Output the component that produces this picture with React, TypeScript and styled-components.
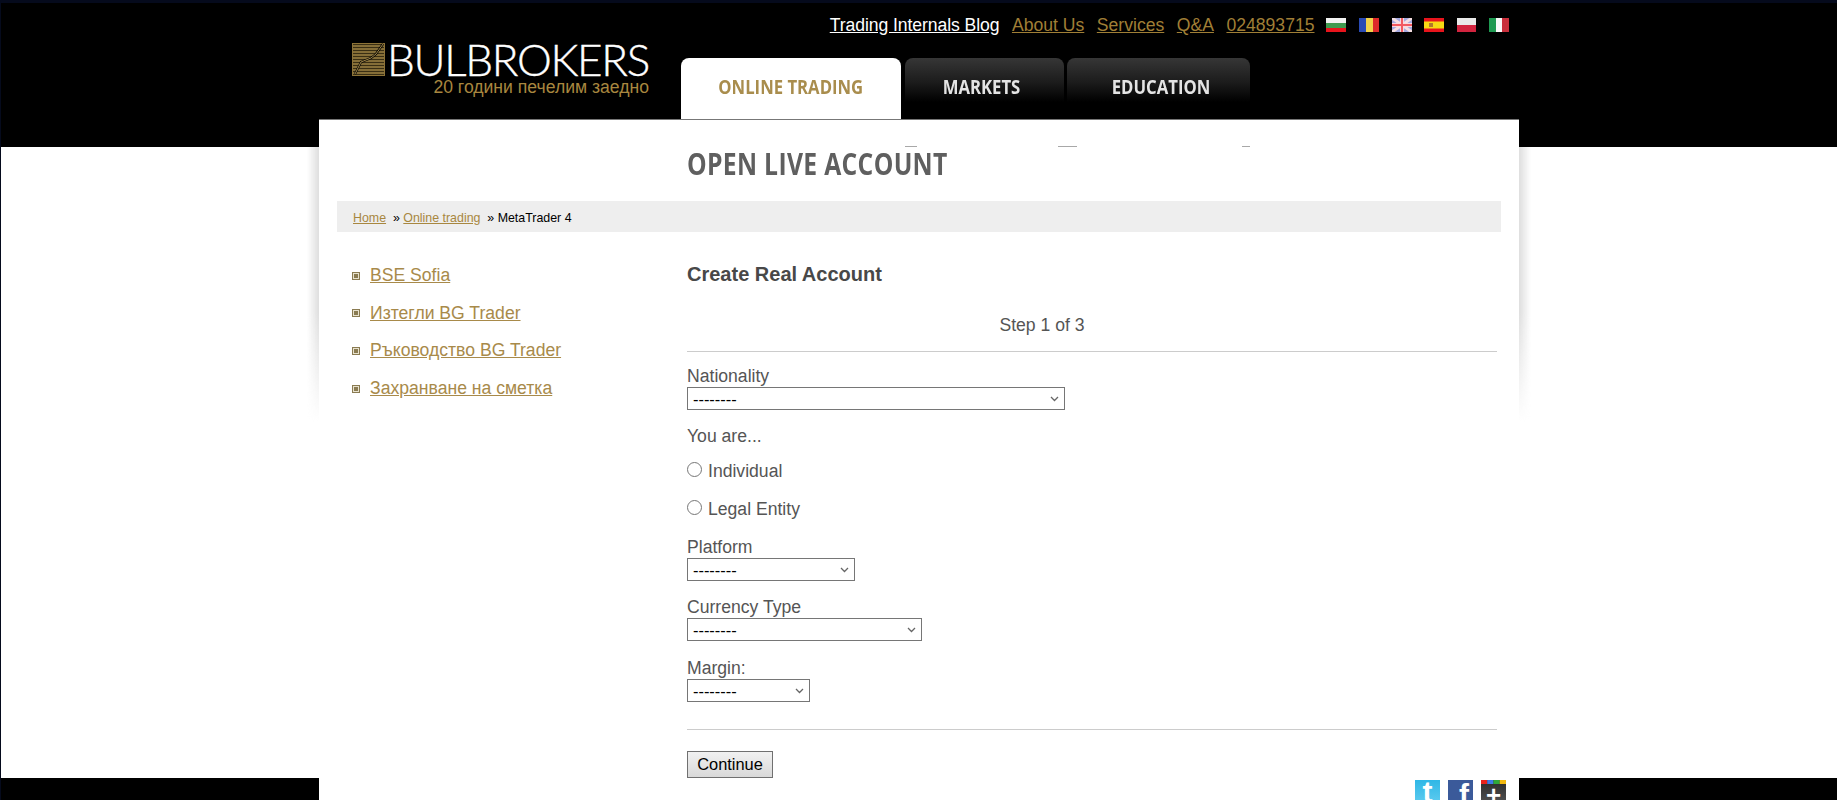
import React from "react";
import styled, { createGlobalStyle } from "styled-components";

const Global = createGlobalStyle`
  html, body { margin: 0; padding: 0; height: 800px; overflow: hidden; background: #fff; }
  body { font-family: "Liberation Sans", Arial, sans-serif; }
`;

const GOLD = "#a8873f";
const CONDENSED = `"Open Sans", "Liberation Sans", sans-serif`;
const CHEVRON = `url("data:image/svg+xml,%3Csvg xmlns='http://www.w3.org/2000/svg' width='9' height='6' viewBox='0 0 9 6'%3E%3Cpath d='M1 1l3.5 3.5L8 1' fill='none' stroke='%23666' stroke-width='1.3'/%3E%3C/svg%3E")`;

const Page = styled.div`
  position: relative;
  z-index: 0;
  height: 800px;
  padding-left: 1px;
  overflow: hidden;
  background: linear-gradient(to bottom, #000 147px, #fff 147px, #fff 778px, #000 778px);
  box-shadow: inset 1px 3px 0 #050a1c;
`;

const Header = styled.header`
  width: 1200px;
  height: 119px;
  margin: 0 auto;
  display: flex;
`;

const Brand = styled.div`
  width: 362px;
  box-sizing: border-box;
  padding: 41px 32px 0 33px;
  flex: none;
`;

const LogoRow = styled.div`
  display: flex;
  align-items: center;
  height: 36px;
  gap: 2px;
`;

const Wordmark = styled.span`
  font-family: "Lato", "Liberation Sans", sans-serif;
  font-weight: 300;
  font-size: 44px;
  line-height: 36px;
  color: #fff;
  letter-spacing: -1.3px;
  -webkit-text-stroke: 0.4px #fff;
  white-space: nowrap;
`;

const Tagline = styled.div`
  text-align: right;
  color: ${GOLD};
  font-size: 17.6px;
  line-height: 20px;
  white-space: nowrap;
`;

const HeaderRight = styled.div`
  flex: 1;
  display: flex;
  flex-direction: column;
`;

const TopBar = styled.div`
  height: 59px;
  box-sizing: border-box;
  padding: 15px 10px 0 0;
  display: flex;
  justify-content: flex-end;
  align-items: flex-start;
`;

const TopLink = styled.a<{ $light?: boolean; $last?: boolean }>`
  color: ${(p) => (p.$light ? "#fff" : "#a07f36")};
  text-decoration: underline;
  font-size: 17.6px;
  line-height: 20px;
  letter-spacing: ${(p) => (p.$light ? "-0.08px" : "0")};
  margin-right: ${(p) => (p.$last ? 11.5 : 12.5)}px;
  white-space: nowrap;
`;

const Flags = styled.div`
  display: flex;
  gap: 12.8px;
  padding-top: 3px;
`;

const Tabs = styled.nav`
  display: flex;
  gap: 3px;
  height: 61px;
  position: relative;
  z-index: 2;
`;

const Tab = styled.a<{ $active?: boolean; $w: number; $nudge?: number }>`
  width: ${(p) => p.$w}px;
  height: ${(p) => (p.$active ? 61 : 60)}px;
  box-sizing: border-box;
  padding: 18px ${(p) => (p.$nudge && p.$nudge < 0 ? -p.$nudge : 0)}px 0 ${(p) => (p.$nudge && p.$nudge > 0 ? p.$nudge : 0)}px;
  border-radius: 8px 8px 0 0;
  text-align: center;
  font-family: ${CONDENSED};
  font-weight: 700;
  font-size: 20px;
  line-height: 22px;
  color: ${(p) => (p.$active ? "#a98d4d" : "#e4e4e4")};
  background: ${(p) => (p.$active ? "#fff" : "linear-gradient(to bottom, #363636 0, #1c1c1c 24px, #000 44px)")};
  margin-right: ${(p) => (p.$active ? 1 : 0)}px;
  white-space: nowrap;
`;

const TabLabel = styled.span`
  display: inline-block;
  transform: scaleX(0.835);
`;

const Sheet = styled.div`
  position: relative;
  width: 1200px;
  height: 681px;
  margin: 0 auto;
  background: #fff;
  border-top: 1px solid #777;
  box-sizing: border-box;

  &::before {
    content: "";
    position: absolute;
    top: 27px;
    left: -12px;
    right: -12px;
    height: 275px;
    z-index: -1;
    background: linear-gradient(to right, transparent 0, #dedede 12px, #dedede calc(100% - 12px), transparent 100%);
    -webkit-mask-image: linear-gradient(to bottom, #000 60%, transparent 100%);
    mask-image: linear-gradient(to bottom, #000 60%, transparent 100%);
  }
`;

const Mark = styled.i<{ $x: number; $w: number }>`
  position: absolute;
  top: 26px;
  left: ${(p) => p.$x}px;
  width: ${(p) => p.$w}px;
  height: 1px;
  background: #a8a8a8;
`;

const PageTitle = styled.h1`
  margin: 0;
  padding: 26px 0 0 368px;
  height: 81px;
  box-sizing: border-box;
  font-family: ${CONDENSED};
  font-weight: 700;
  font-size: 31px;
  line-height: 34px;
  color: #5f5f5f;
  letter-spacing: 0.4px;
  white-space: nowrap;
`;

const TitleText = styled.span`
  display: inline-block;
  transform-origin: left center;
  transform: scaleX(0.797);
`;

const Breadcrumb = styled.div`
  height: 31px;
  margin: 0 18px;
  padding: 2px 0 0 16px;
  box-sizing: border-box;
  background: #eee;
  display: flex;
  align-items: center;
  font-size: 12.4px;
  color: #000;
  white-space: pre;
`;

const CrumbLink = styled.a`
  color: ${GOLD};
  text-decoration: underline;
`;

const Body = styled.div`
  display: flex;
  height: 547px;
`;

const Sidebar = styled.ul`
  list-style: none;
  margin: 0;
  padding: 31px 0 0 33px;
  width: 368px;
  box-sizing: border-box;
  flex: none;
`;

const SideItem = styled.li`
  display: flex;
  align-items: center;
  gap: 10px;
  height: 25px;
  margin-bottom: 12.7px;
`;

const Bullet = styled.span`
  width: 8px;
  height: 8px;
  box-sizing: border-box;
  border: 1px solid #8a7b52;
  background: #8a7b52;
  box-shadow: inset 0 0 0 1px #e8e2ce;
  flex: none;
`;

const SideLink = styled.a`
  color: #a88a4a;
  text-decoration: underline;
  font-size: 17.6px;
`;

const Main = styled.main`
  width: 810px;
  color: #555;
  font-size: 17.6px;
`;

const Heading = styled.h2`
  margin: 30px 0 0;
  font-size: 20px;
  line-height: 24px;
  font-weight: 700;
  color: #484848;
`;

const Step = styled.div`
  width: 710px;
  margin-top: 27px;
  text-align: center;
  line-height: 24px;
`;

const Rule = styled.hr<{ $top: number }>`
  margin: ${(p) => p.$top}px 0 0;
  border: 0;
  height: 1px;
  background: #ccc;
`;

const Field = styled.div<{ $top: number }>`
  display: flex;
  flex-direction: column;
  align-items: flex-start;
  margin-top: ${(p) => p.$top}px;
`;

const FieldLabel = styled.label`
  line-height: 22px;
`;

const Select = styled.select<{ $w: number }>`
  appearance: none;
  -webkit-appearance: none;
  width: ${(p) => p.$w}px;
  height: 23px;
  font-family: "Liberation Sans", Arial, sans-serif;
  font-size: 16.4px;
  color: #000;
  background: #fff ${CHEVRON} no-repeat right 5px center;
  border: 1px solid #767676;
  border-radius: 0;
  padding: 0 0 0 5px;
  display: block;
`;

const RadioRow = styled.label<{ $top: number }>`
  display: flex;
  align-items: center;
  gap: 6px;
  height: 24px;
  margin-top: ${(p) => p.$top}px;
`;

const Radio = styled.input`
  width: 15px;
  height: 15px;
  margin: -4px 0 0 0;
  flex: none;
`;

const Plain = styled.div`
  line-height: 20px;
  margin-top: 16px;
`;

const Continue = styled.button`
  display: block;
  margin-top: 21px;
  width: 86px;
  height: 27px;
  padding: 0;
  background: linear-gradient(to bottom, #f1f1f1, #d9d9d9);
  border: 1px solid #707070;
  border-radius: 0;
  font-family: "Liberation Sans", Arial, sans-serif;
  font-size: 16.4px;
  color: #000;
`;

const SocialRow = styled.div`
  display: flex;
  justify-content: flex-end;
  gap: 8px;
  padding: 1px 13px 0 0;
`;

const Social = styled.a<{ $bg: string; $pad: string; $size: number }>`
  position: relative;
  width: 25px;
  height: 25px;
  box-sizing: border-box;
  padding: ${(p) => p.$pad};
  display: flex;
  justify-content: center;
  font-family: "Liberation Sans", sans-serif;
  font-weight: 700;
  color: #fff;
  font-size: ${(p) => p.$size}px;
  line-height: 20px;
  background: ${(p) => p.$bg};
  overflow: hidden;
`;

const GoogleStripe = styled.svg`
  position: absolute;
  top: 0;
  left: 0;
`;

const LogoIcon = () => (
  <svg width="33" height="33" viewBox="0 0 33 33" style={{ flex: "none" }}>
    <rect x="0.5" y="0.5" width="32" height="32" fill="#3a2f14" stroke="#8d7337" />
    {[3, 6, 9, 12, 15, 18, 21, 24, 27, 30].map((y) => (
      <line key={y} x1="1" x2="32" y1={y} y2={y} stroke="#a68a48" strokeWidth="1.4" />
    ))}
    <path d="M3 31 L9 19 L19 15 L24 11 L31 1" fill="none" stroke="#000" strokeWidth="2.2" />
    <path d="M3 31 L9 19 L19 15 L24 11 L31 1" fill="none" stroke="#caa95c" strokeWidth="0.8" />
  </svg>
);

const flagBlur = { filter: "blur(0.5px)" };

const FlagBG = () => (
  <svg width="20" height="14" viewBox="0 0 20 14" style={flagBlur}>
    <rect width="20" height="5" fill="#f2f2f2" />
    <rect y="5" width="20" height="5" fill="#3f9a4f" />
    <rect y="10" width="20" height="4" fill="#e8141c" />
  </svg>
);
const FlagRO = () => (
  <svg width="20" height="14" viewBox="0 0 20 14" style={flagBlur}>
    <rect width="7" height="14" fill="#2a4bb5" />
    <rect x="7" width="7" height="14" fill="#f3d34a" />
    <rect x="14" width="6" height="14" fill="#dc2a2a" />
  </svg>
);
const FlagUK = () => (
  <svg width="20" height="14" viewBox="0 0 20 14" style={flagBlur}>
    <rect width="20" height="14" fill="#a4a9e0" />
    <path d="M0 0 L20 14 M20 0 L0 14" stroke="#f5dfe2" strokeWidth="3" />
    <path d="M10 0 V14 M0 7 H20" stroke="#f8d8dc" strokeWidth="4" />
    <path d="M10 0 V14 M0 7 H20" stroke="#f25a60" strokeWidth="2" />
  </svg>
);
const FlagES = () => (
  <svg width="20" height="14" viewBox="0 0 20 14" style={flagBlur}>
    <rect width="20" height="14" fill="#e8141c" />
    <rect y="3.5" width="20" height="7" fill="#f7d914" />
    <rect x="5" y="5" width="4" height="4" fill="#b0792c" />
  </svg>
);
const FlagPL = () => (
  <svg width="19" height="14" viewBox="0 0 19 14" style={flagBlur}>
    <rect width="19" height="7" fill="#e9e9e9" />
    <rect y="7" width="19" height="7" fill="#d2243f" />
  </svg>
);
const FlagIT = () => (
  <svg width="20" height="14" viewBox="0 0 20 14" style={flagBlur}>
    <rect width="7" height="14" fill="#1f9a52" />
    <rect x="7" width="6" height="14" fill="#fafafa" />
    <rect x="13" width="7" height="14" fill="#c9303c" />
  </svg>
);

const sideLinks = ["BSE Sofia", "Изтегли BG Trader", "Ръководство BG Trader", "Захранване на сметка"];

export default function App() {
  return (
    <Page>
      <Global />
      <Header>
        <Brand>
          <LogoRow>
            <LogoIcon />
            <Wordmark>BULBROKERS</Wordmark>
          </LogoRow>
          <Tagline>20 години печелим заедно</Tagline>
        </Brand>
        <HeaderRight>
          <TopBar>
            <TopLink $light>Trading Internals Blog</TopLink>
            <TopLink>About Us</TopLink>
            <TopLink>Services</TopLink>
            <TopLink>Q&amp;A</TopLink>
            <TopLink $last>024893715</TopLink>
            <Flags>
              <FlagBG />
              <FlagRO />
              <FlagUK />
              <FlagES />
              <FlagPL />
              <FlagIT />
            </Flags>
          </TopBar>
          <Tabs>
            <Tab $active $w={220}><TabLabel>ONLINE TRADING</TabLabel></Tab>
            <Tab $w={159} $nudge={-6}><TabLabel>MARKETS</TabLabel></Tab>
            <Tab $w={183} $nudge={5}><TabLabel>EDUCATION</TabLabel></Tab>
          </Tabs>
        </HeaderRight>
      </Header>
      <Sheet>
        <Mark $x={586} $w={12} />
        <Mark $x={739} $w={19} />
        <Mark $x={923} $w={8} />
        <PageTitle><TitleText>OPEN LIVE ACCOUNT</TitleText></PageTitle>
        <Breadcrumb>
          <CrumbLink>Home</CrumbLink>
          {"  » "}
          <CrumbLink>Online trading</CrumbLink>
          {"  » MetaTrader 4"}
        </Breadcrumb>
        <Body>
          <Sidebar>
            {sideLinks.map((t) => (
              <SideItem key={t}>
                <Bullet />
                <SideLink>{t}</SideLink>
              </SideItem>
            ))}
          </Sidebar>
          <Main>
            <Heading>Create Real Account</Heading>
            <Step>Step 1 of 3</Step>
            <Rule $top={14} />
            <Field $top={13}>
              <FieldLabel>Nationality</FieldLabel>
              <Select $w={378}><option>--------</option></Select>
            </Field>
            <Plain>You are...</Plain>
            <RadioRow $top={13}><Radio type="radio" name="kind" />Individual</RadioRow>
            <RadioRow $top={14}><Radio type="radio" name="kind" />Legal Entity</RadioRow>
            <Field $top={15}>
              <FieldLabel>Platform</FieldLabel>
              <Select $w={168}><option>--------</option></Select>
            </Field>
            <Field $top={15}>
              <FieldLabel>Currency Type</FieldLabel>
              <Select $w={235}><option>--------</option></Select>
            </Field>
            <Field $top={16}>
              <FieldLabel>Margin:</FieldLabel>
              <Select $w={123}><option>--------</option></Select>
            </Field>
            <Rule $top={27} />
            <Continue>Continue</Continue>
          </Main>
        </Body>
        <SocialRow>
          <Social $bg="linear-gradient(to bottom, #2fb7e6, #62cdf0)" $pad="2px 0 0 0" $size={30}>t</Social>
          <Social $bg="#3b5a9a" $pad="5px 0 0 7px" $size={30}>f</Social>
          <Social $bg="linear-gradient(to bottom, #2a2a2a, #555)" $pad="5px 0 0 0" $size={26}>
            <GoogleStripe width="25" height="4">
              <rect width="6.25" height="4" fill="#e8231c" />
              <rect x="6.25" width="6.25" height="4" fill="#3f7be8" />
              <rect x="12.5" width="6.25" height="4" fill="#2fa83a" />
              <rect x="18.75" width="6.25" height="4" fill="#f2b90f" />
            </GoogleStripe>
            +
          </Social>
        </SocialRow>
      </Sheet>
    </Page>
  );
}
